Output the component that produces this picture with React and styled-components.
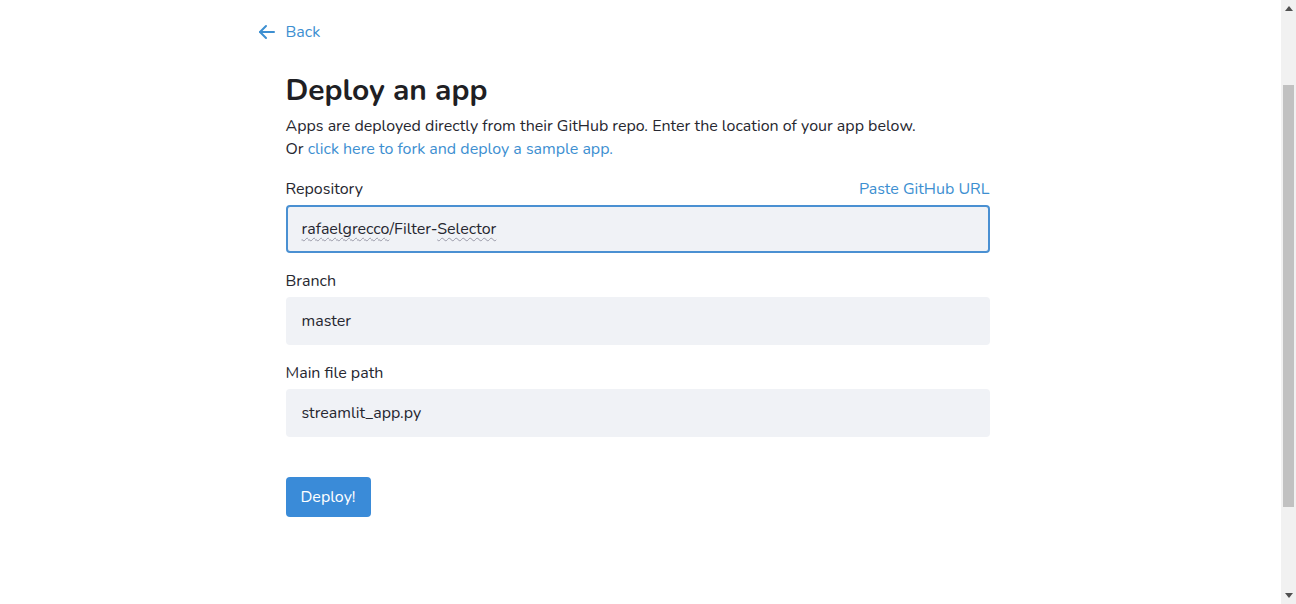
import React from 'react';
import styled, { createGlobalStyle } from 'styled-components';

const GlobalStyle = createGlobalStyle`
   html, body {
      margin: 0;
      padding: 0;
      background: #ffffff;
      overflow: hidden;
   }
   body {
      font-family: 'Nunito', 'Lato', 'Open Sans', sans-serif;
      color: #262730;
   }
`;

const Frame = styled.div`
   display: flex;
   height: 604px;
`;

const Page = styled.div`
   flex: 1;
   padding-top: 20px;
`;

const Wrapper = styled.div`
   width: 732px;
   margin: 0 auto;
   padding-right: 34px;
`;

const BackLink = styled.a`
   display: inline-flex;
   align-items: center;
   gap: 11px;
   color: #3d8fd1;
   font-size: 16px;
   text-decoration: none;
   cursor: pointer;
   height: 24px;
`;

const Content = styled.div`
   margin-left: 28px;
   width: 704px;
`;

const Title = styled.h1`
   font-size: 30px;
   font-weight: 700;
   margin: 25px 0 4px;
   line-height: 40px;
   color: #1f1f24;
`;

const Text = styled.p`
   margin: 0;
   font-size: 16px;
   line-height: 23px;
`;

const Link = styled.a`
   color: #3d8fd1;
   text-decoration: none;
   cursor: pointer;
`;

const Field = styled.div`
   margin-top: ${(p) => (p.first ? '15px' : '15px')};
`;

const LabelRow = styled.div`
   display: flex;
   justify-content: space-between;
   align-items: center;
   font-size: 16px;
   line-height: 26px;
   margin-bottom: 3px;
`;

const Input = styled.div`
   height: 48px;
   box-sizing: border-box;
   background: #f0f2f6;
   border-radius: 4px;
   border: 2px solid ${(p) => (p.focused ? '#4a90d2' : 'transparent')};
   display: flex;
   align-items: center;
   padding: 0 14px;
   font-size: 16px;
   color: #262730;
`;

const Squiggly = styled.span`
   text-decoration: underline wavy #9a9aa8;
   text-decoration-thickness: 1px;
   text-underline-offset: 3px;
`;

const Button = styled.button`
   margin-top: 40px;
   background: #3a8bd8;
   color: #ffffff;
   border: none;
   border-radius: 4px;
   height: 40px;
   padding: 0 15px;
   font-family: inherit;
   font-size: 16px;
   cursor: pointer;
`;

const Scrollbar = styled.div`
   width: 15px;
   background: #f1f1f1;
   display: flex;
   flex-direction: column;
   align-items: center;
   padding: 2px 0;
   box-sizing: border-box;
`;

const ArrowBtn = styled.div`
   height: 13px;
   display: flex;
   align-items: center;
   justify-content: center;
`;

const Thumb = styled.div`
   width: 11px;
   height: 422px;
   margin-top: 70px;
   background: #c1c1c1;
`;

const Spacer = styled.div`
   flex: 1;
`;

const App = () => (
   <>
      <GlobalStyle />
      <Frame>
         <Page>
            <Wrapper>
               <BackLink>
                  <svg width="17" height="16" viewBox="0 0 17 16" fill="none" stroke="#3d8fd1" strokeWidth="2" strokeLinecap="round" strokeLinejoin="round">
                     <path d="M16 8H2" />
                     <path d="M8 2L2 8l6 6" />
                  </svg>
                  Back
               </BackLink>
               <Content>
                  <Title>Deploy an app</Title>
                  <Text>Apps are deployed directly from their GitHub repo. Enter the location of your app below.</Text>
                  <Text>
                     Or <Link>click here to fork and deploy a sample app.</Link>
                  </Text>

                  <Field first>
                     <LabelRow>
                        <span>Repository</span>
                        <Link>Paste GitHub URL</Link>
                     </LabelRow>
                     <Input focused>
                        <span>
                           <Squiggly>rafaelgrecco</Squiggly>/Filter-<Squiggly>Selector</Squiggly>
                        </span>
                     </Input>
                  </Field>

                  <Field>
                     <LabelRow>
                        <span>Branch</span>
                     </LabelRow>
                     <Input>master</Input>
                  </Field>

                  <Field>
                     <LabelRow>
                        <span>Main file path</span>
                     </LabelRow>
                     <Input>streamlit_app.py</Input>
                  </Field>

                  <Button>Deploy!</Button>
               </Content>
            </Wrapper>
         </Page>
         <Scrollbar>
            <ArrowBtn>
               <svg width="8" height="5" viewBox="0 0 8 5"><path d="M4 0L8 5H0z" fill="#505050" /></svg>
            </ArrowBtn>
            <Thumb />
            <Spacer />
            <ArrowBtn>
               <svg width="8" height="5" viewBox="0 0 8 5"><path d="M0 0h8L4 5z" fill="#505050" /></svg>
            </ArrowBtn>
         </Scrollbar>
      </Frame>
   </>
);

export default App;
